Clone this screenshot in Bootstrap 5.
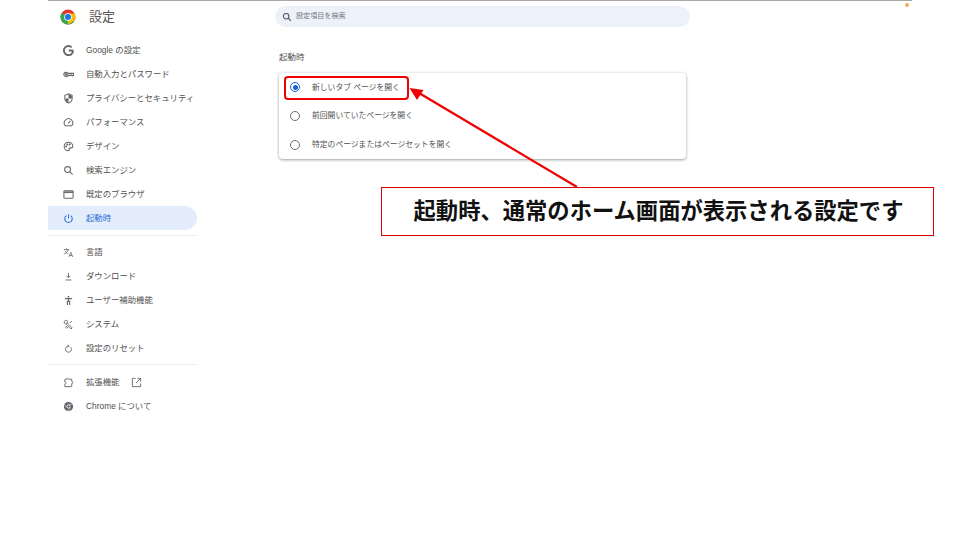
<!DOCTYPE html>
<html lang="ja">
<head>
<meta charset="utf-8">
<title>設定</title>
<link href="https://cdn.jsdelivr.net/npm/bootstrap@5.3.0/dist/css/bootstrap.min.css" rel="stylesheet">
<style>
html,body{height:100%;overflow:hidden;background:#fff;}
body{font-family:"Liberation Sans","Noto Sans CJK JP",sans-serif;color:#474747;position:relative;width:960px;height:540px;}
.frame{margin:0 48px;height:540px;border-top:1px solid #a8a8a8;position:relative;}
.side{width:150px;flex:none;}
.brand{height:32px;padding-left:12px;gap:13px;font-size:13px;color:#555;}
.brand svg{width:16px;height:16px;}
.navlist{margin-top:5px;}
.item{height:24px;display:flex;align-items:center;font-size:8.4px;color:#505050;padding-left:15px;border-radius:0 12px 12px 0;white-space:nowrap;}
.item svg{width:11px;height:11px;flex:none;margin-right:12px;fill:none;stroke:#66696d;stroke-width:1.15;}
.item.on{background:#e3edfc;color:#2b6fd8;width:149px;}
.item.on svg{stroke:#2b72dc;}
.rule{height:1px;background:#f0f0f0;margin:5px 0 4px;width:150px;}
.rule2{margin:4px 0 5px;}
.item svg.ext{width:11px;height:11px;margin:0 0 0 11px;}
.main{flex:1;padding-left:77px;}
.search{width:415px;height:21px;margin-top:5px;background:#edf2fa;border-radius:11px;padding-left:7px;font-size:7.1px;color:#75787c;gap:4px;}
.search svg{width:10px;height:10px;fill:none;stroke:#555;stroke-width:1.3;}
.head{margin:24px 0 0 4px;font-size:8.5px;line-height:12px;height:12px;color:#505050;}
.panel{margin:10px 0 0 4px;width:407px;height:86px;background:#fff;border-radius:4px;box-shadow:0 1px 3px rgba(60,64,67,.45),0 0 3px rgba(60,64,67,.12);}
.opt{height:28.7px;display:flex;align-items:center;padding-left:11px;font-size:7.8px;color:#505050;white-space:nowrap;}
.dot{width:10px;height:10px;border:1.3px solid #6a6d71;border-radius:50%;margin-right:12px;flex:none;display:flex;align-items:center;justify-content:center;}
.dot.sel{border-color:#1a62d6;}
.dot.sel::after{content:"";width:5px;height:5px;border-radius:50%;background:#1a62d6;}
.spot{position:absolute;left:905px;top:3px;width:4px;height:4px;border-radius:50%;background:#f9ab55;}
.hilite{position:absolute;left:284px;top:76px;width:125px;height:24px;border:2px solid #f00000;border-radius:4px;}
.arrow{position:absolute;left:400px;top:80px;width:190px;height:112px;}
.note{position:absolute;left:381px;top:187px;width:553px;height:49px;padding:0 0 3px 2px;background:#fff;border:1px solid #d80000;font-size:22.3px;font-weight:700;color:#111;display:flex;align-items:center;justify-content:center;font-family:"Noto Sans CJK JP",sans-serif;white-space:nowrap;}
</style>
</head>
<body>
<div class="frame d-flex">
  <nav class="side">
    <div class="brand d-flex align-items-center">
      <svg viewBox="0 0 16 16">
        <circle cx="8" cy="8" r="7.5" fill="#e0372c"/>
        <path d="M8 8 1.5 11.75A7.5 7.5 0 0 1 1.6 4.1Z" fill="#34a853"/>
        <path d="M8 8 1.5 11.75A7.5 7.5 0 0 0 8 15.5 7.5 7.5 0 0 0 14.5 11.75Z" fill="#34a853"/>
        <path d="M8 4.4h6.8a7.5 7.5 0 0 1-.3 7.35L8 15.5Z" fill="#fbbc04"/>
        <circle cx="8" cy="8" r="3.8" fill="#fff"/>
        <circle cx="8" cy="8" r="3" fill="#1a73e8"/>
      </svg>
      <span>設定</span>
    </div>
    <div class="navlist">
      <div class="item"><svg viewBox="0 0 12 12"><path d="M11 6H6.200M11 6A5 5 0 1 1 9.500 2.500" stroke-width="2"/></svg>Google の設定</div>
      <div class="item"><svg viewBox="0 0 12 12"><circle cx="3.2" cy="6" r="2.3"/><circle cx="3.2" cy="6" r=".7"/><path d="M5.5 4.800h5.900v2.400H10l-.6-.7-.7.7-.7-.7-.7.7H5.500"/></svg>自動入力とパスワード</div>
      <div class="item"><svg viewBox="0 0 12 12"><path d="M6 1 2 2.600v3c0 2.600 1.700 4.500 4 5.300 2.300-.8 4-2.700 4-5.300v-3Z"/><path d="M6 1.500v4.400H2.400C2.500 8 4 9.700 6 10.400V5.900h3.600V2.900Z" fill="#5f6368" stroke="none"/></svg>プライバシーとセキュリティ</div>
      <div class="item"><svg viewBox="0 0 12 12"><path d="M2.500 9.500a4.600 4.600 0 1 1 7 0Z"/><path d="m5.600 7 2.400-2.600"/></svg>パフォーマンス</div>
      <div class="item"><svg viewBox="0 0 12 12"><path d="M6 1.300a4.700 4.700 0 1 0 0 9.400c1 0 1.200-.8.800-1.500-.5-.9 0-1.700 1-1.700h1.400c.9 0 1.500-.7 1.500-1.800C10.700 3.200 8.600 1.300 6 1.300Z"/><circle cx="3.500" cy="6" r=".5"/><circle cx="4.700" cy="3.800" r=".5"/><circle cx="7.300" cy="3.800" r=".5"/></svg>デザイン</div>
      <div class="item"><svg viewBox="0 0 12 12"><circle cx="5" cy="5" r="3.200"/><path d="m7.400 7.400 3.200 3.200"/></svg>検索エンジン</div>
      <div class="item"><svg viewBox="0 0 12 12"><rect x="1" y="2" width="10" height="8" rx=".6"/><path d="M1 3.500h10" stroke-width="1.800"/></svg>既定のブラウザ</div>
      <div class="item on"><svg viewBox="0 0 12 12"><path d="M6 1.300v4.700"/><path d="M3.700 2.900a4.100 4.100 0 1 0 4.600 0"/></svg>起動時</div>
      <div class="rule"></div>
      <div class="item"><svg viewBox="0 0 12 12"><path d="M.8 2.800h6M3.800 1.500v1.300M5.600 2.800C5.100 5 3.200 6.900 1 7.800M2.200 4.300C3 5.800 4.200 6.800 5.600 7.500" stroke-width=".9"/><path d="m6.400 10.800 2.100-5 2.100 5M7.100 9.300h2.800" stroke-width=".9"/></svg>言語</div>
      <div class="item"><svg viewBox="0 0 12 12"><path d="M6 2v5.200M3.900 5.300 6 7.400l2.100-2.100M2.700 9.800h6.600" stroke-width="1"/></svg>ダウンロード</div>
      <div class="item"><svg viewBox="0 0 12 12"><circle cx="6" cy="2" r="1" fill="#5f6368" stroke="none"/><path d="M2 4h8M6 4v3M4.800 11V7h2.400v4" stroke-width="1.300"/></svg>ユーザー補助機能</div>
      <div class="item"><svg viewBox="0 0 12 12"><path d="M4.300 1.500a2.300 2.300 0 0 0-2.900 2.900l1.100 1 1.900-.4.400-1.900Zm.6 3 5.100 5.200-1.200 1.200L3.700 5.800" stroke-width="1"/><path d="M9.600 2.200 7.400 4.400M4.700 7.400l-1.800 1.800 1 1 1.800-1.800" stroke-width="1"/></svg>システム</div>
      <div class="item"><svg viewBox="0 0 12 12"><path d="M6.300 3.400H5.800a3.300 3.300 0 1 0 2.700 1.200" stroke-width="1"/><path d="M5 2 6.500 3.400 5.100 4.800" stroke-width="1"/></svg>設定のリセット</div>
      <div class="rule rule2"></div>
      <div class="item"><svg viewBox="0 0 12 12"><path d="M2 2.500h1.800a1 1 0 0 1 2-.1h3.700v2.400a1.100 1.100 0 0 1 0 2.400v3.300H2V7.900a1.100 1.100 0 0 0 0-2.200Z" stroke-width="1"/></svg>拡張機能<svg class="ext" viewBox="0 0 12 12"><path d="M5 1.500H1.500v9h9V7M7 1.500h3.500V5M10.500 1.500 5.500 6.500" stroke-width="1"/></svg></div>
      <div class="item"><svg viewBox="0 0 12 12"><circle cx="6" cy="6" r="5" fill="#5f6368" stroke="none"/><circle cx="6" cy="6" r="2.100" fill="#fff" stroke="none"/><circle cx="6" cy="6" r="1.400" fill="#5f6368" stroke="none"/><path d="M6 3.600h4.400M3.900 7.200 1.800 3.600M8 7.300l-2.200 3.400" stroke="#fff" stroke-width=".6"/></svg>Chrome について</div>
    </div>
  </nav>
  <main class="main">
    <div class="search d-flex align-items-center"><svg viewBox="0 0 12 12"><circle cx="5" cy="5" r="3.300"/><path d="m7.500 7.500 3.200 3.200"/></svg><span>設定項目を検索</span></div>
    <div class="head">起動時</div>
    <div class="panel">
      <div class="opt"><span class="dot sel"></span>新しいタブ ページを開く</div>
      <div class="opt"><span class="dot"></span>前回開いていたページを開く</div>
      <div class="opt"><span class="dot"></span>特定のページまたはページセットを開く</div>
    </div>
  </main>
</div>
<div class="spot"></div>
<div class="hilite"></div>
<svg class="arrow" viewBox="0 0 190 112"><path d="M177 107 19 13" stroke="#f00000" stroke-width="2.200" fill="none"/><path d="M9.500 8 23.500 10 17 20Z" fill="#f00000"/></svg>
<div class="note">起動時、通常のホーム画面が表示される設定です</div>
<script src="https://cdn.jsdelivr.net/npm/bootstrap@5.3.0/dist/js/bootstrap.bundle.min.js"></script>
</body>
</html>
